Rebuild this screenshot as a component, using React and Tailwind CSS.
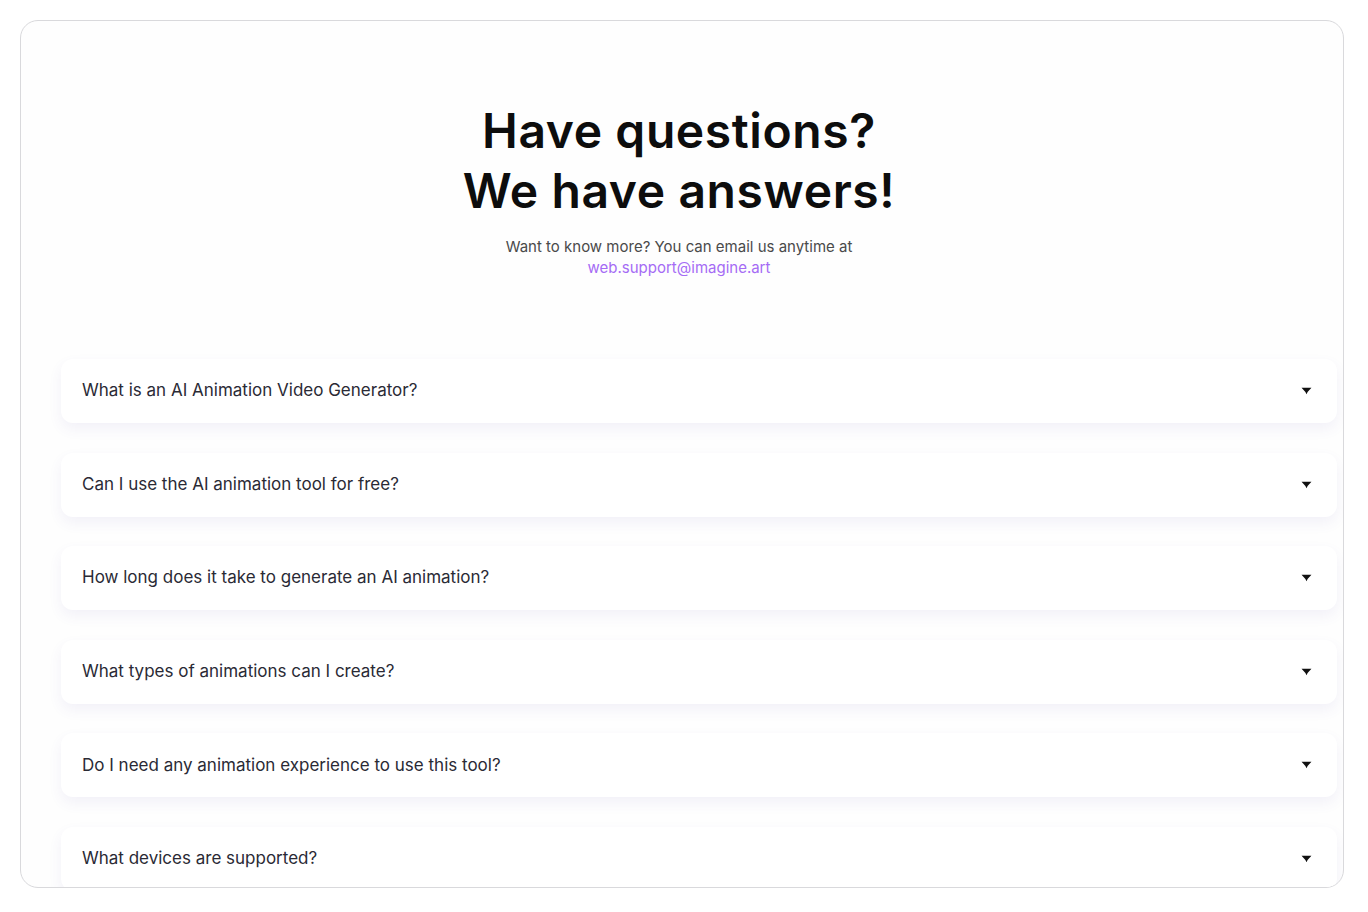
import React from "react";

const questions = [
  "What is an AI Animation Video Generator?",
  "Can I use the AI animation tool for free?",
  "How long does it take to generate an AI animation?",
  "What types of animations can I create?",
  "Do I need any animation experience to use this tool?",
  "What devices are supported?",
];

function Caret() {
  return (
    <svg width="11" height="8" viewBox="0 0 10 7" className="shrink-0">
      <path d="M0.5 0.5 H9.5 L6 4.5 L5 6.5 L4 4.5 Z" fill="#111" />
    </svg>
  );
}

export default function App() {
  return (
    <div className="w-full h-[912px] bg-white pt-[20px] pl-[20px] pr-[24px] pb-[24px]" style={{ fontFamily: "Inter, 'Noto Sans', sans-serif" }}>
      <div className="h-[868px] rounded-[18px] border border-[#d9d9dc] bg-[#fefefe] overflow-hidden flex flex-col">
        <div className="pt-[80px] pr-[6px] flex flex-col items-center">
          <h1 className="text-[48px] leading-[60px] font-semibold text-[#0d0d0d] text-center tracking-[0.6px]">
            Have questions?
            <br />
            We have answers!
          </h1>
          <p className="mt-[15px] text-[15px] leading-[21px] text-[#4a4a4a] text-center">
            Want to know more? You can email us anytime at
            <br />
            <span className="text-[#a56bf5]">web.support@imagine.art</span>
          </p>
        </div>
        <div className="mt-[81px] pl-[40px] pr-[6px] flex flex-col gap-[29.6px]">
          {questions.map((q) => (
            <div
              key={q}
              className="h-[64px] shrink-0 bg-white rounded-[12px] shadow-[0_6px_14px_rgba(90,70,170,0.07)] flex items-center justify-between pl-[21px] pr-[25px]"
            >
              <span className="text-[17px] text-[#2a2a35]">{q}</span>
              <Caret />
            </div>
          ))}
        </div>
      </div>
    </div>
  );
}
